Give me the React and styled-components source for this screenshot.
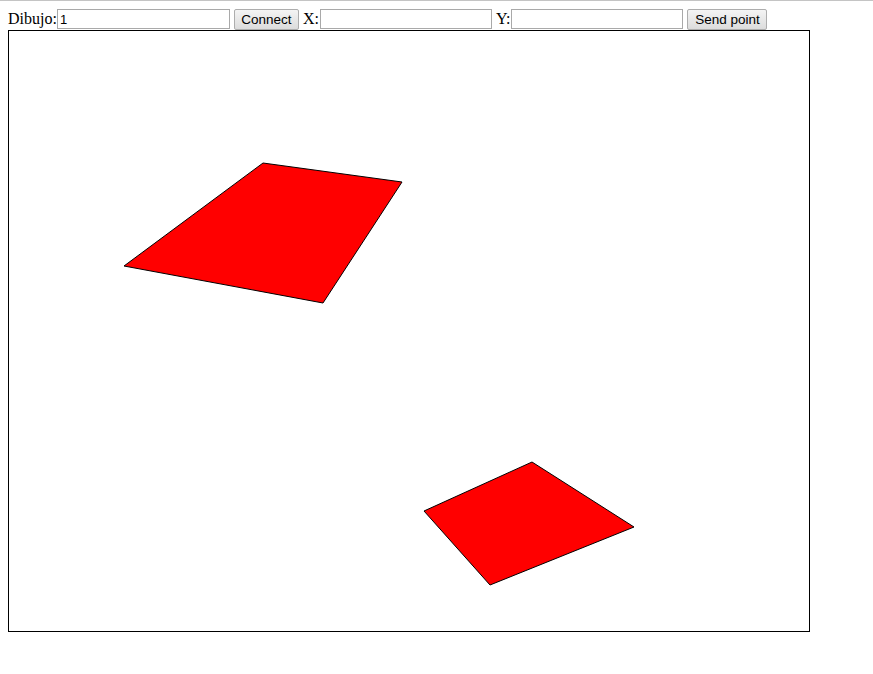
import styled, { createGlobalStyle } from "styled-components";

const GlobalStyle = createGlobalStyle`
  html, body {
    margin: 0;
    padding: 0;
    background: #ffffff;
  }
  body {
    border-top: 1px solid #c4c4c4;
    font-family: "Liberation Serif", "Times New Roman", serif;
    font-size: 16px;
    color: #000;
  }
`;

const Page = styled.div`
  padding: 7px 8px 8px 8px;
`;

const Toolbar = styled.form`
  display: flex;
  align-items: center;
  height: 22px;
`;

const Label = styled.label`
  font-family: "Liberation Serif", "Times New Roman", serif;
  font-size: 16px;
  line-height: 18px;
  margin-left: ${(p) => p.$gap || 0}px;
  padding-right: ${(p) => (p.$gap ? 1 : 0)}px;
`;

const TextInput = styled.input`
  box-sizing: border-box;
  width: ${(p) => p.$width}px;
  height: 20px;
  margin: 0;
  padding: 1px 2px;
  border: 1px solid #a9a9a9;
  background: #fff;
  font-family: "Liberation Sans", Arial, sans-serif;
  font-size: 13px;
  color: #000;
  outline: none;
`;

const Button = styled.button`
  box-sizing: border-box;
  width: ${(p) => p.$width}px;
  height: 21px;
  margin: 0 0 0 4px;
  padding: 0 4px;
  border: 1px solid #adadad;
  border-radius: 2px;
  background: linear-gradient(#f4f4f4, #dcdcdc);
  font-family: "Liberation Sans", Arial, sans-serif;
  font-size: 13.5px;
  color: #000;
  line-height: 17px;
`;

const Board = styled.svg`
  display: block;
  width: 800px;
  height: 600px;
  border: 1px solid #000;
  background: #fff;
`;

const shapes = [
  "254,132 393,151 314,272 115,235",
  "523,431 625,496 481,554 415,480",
];

export default function App() {
  return (
    <>
      <GlobalStyle />
      <Page>
        <Toolbar onSubmit={(e) => e.preventDefault()}>
          <Label htmlFor="dibujo">Dibujo:</Label>
          <TextInput id="dibujo" $width={173} defaultValue="1" />
          <Button type="button" $width={65}>
            Connect
          </Button>
          <Label htmlFor="px" $gap={4}>
            X:
          </Label>
          <TextInput id="px" $width={172} />
          <Label htmlFor="py" $gap={4}>
            Y:
          </Label>
          <TextInput id="py" $width={172} />
          <Button type="button" $width={80}>
            Send point
          </Button>
        </Toolbar>
        <Board viewBox="0 0 800 600">
          {shapes.map((pts) => (
            <polygon
              key={pts}
              points={pts}
              fill="#ff0000"
              stroke="#000"
              strokeWidth="1"
            />
          ))}
        </Board>
      </Page>
    </>
  );
}
